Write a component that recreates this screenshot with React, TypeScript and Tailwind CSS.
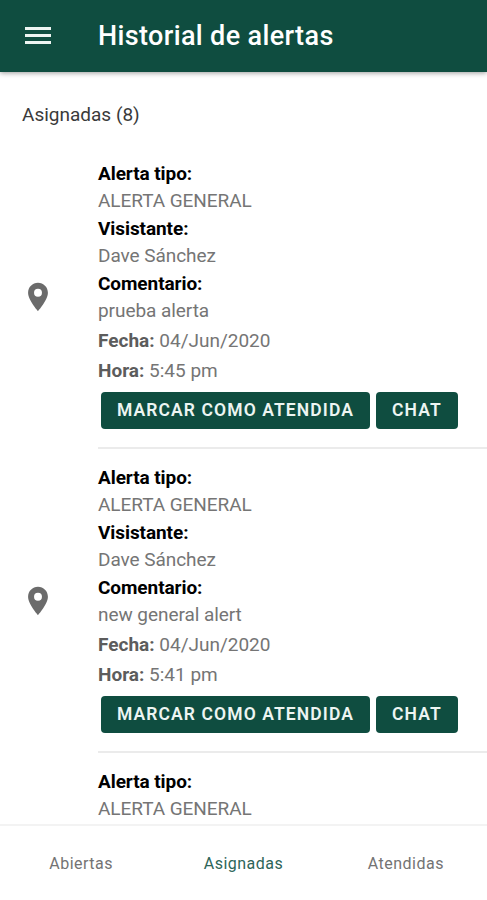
import React from "react";

type Alert = { type: string; visitor?: string; comment?: string; date?: string; time?: string };

const alerts: Alert[] = [
  { type: "ALERTA GENERAL", visitor: "Dave Sánchez", comment: "prueba alerta", date: "04/Jun/2020", time: "5:45 pm" },
  { type: "ALERTA GENERAL", visitor: "Dave Sánchez", comment: "new general alert", date: "04/Jun/2020", time: "5:41 pm" },
  { type: "ALERTA GENERAL" },
];

function Field({ label, value }: { label: string; value: string }) {
  return (
    <>
      <dt className="font-bold tracking-[-0.08px] text-black">{label}</dt>
      <dd className="tracking-[-0.06px]">{value}</dd>
    </>
  );
}

function AlertItem({ alert }: { alert: Alert }) {
  return (
    <li className="flex h-[304px] shrink-0 items-center">
      <div className="flex w-[98px] shrink-0 pl-[21px]">
        {alert.date && (
          <svg viewBox="0 0 24 24" className="size-[34px] fill-[#6b6b6b]">
            <path d="M12 2C8.13 2 5 5.13 5 9c0 5.25 7 13 7 13s7-7.750 7-13c0-3.870-3.130-7-7-7zm0 9.800a2.800 2.800 0 1 1 0-5.600 2.800 2.800 0 0 1 0 5.600z" />
          </svg>
        )}
      </div>
      <div className="h-full flex-1 border-b-2 border-[#ebebeb] pt-[15px]">
        <dl className="text-[19px] leading-[27.4px] text-[#757575]">
          <Field label="Alerta tipo:" value={alert.type} />
          {alert.visitor && <Field label="Visistante:" value={alert.visitor} />}
          {alert.comment && <Field label="Comentario:" value={alert.comment} />}
        </dl>
        {alert.date && (
          <>
            <div className="mt-[1.600px] text-[19px] leading-[29.7px] text-[#757575]">
              <p><b className="text-[#5c5c5c]">Fecha:</b> {alert.date}</p>
              <p><b className="text-[#5c5c5c]">Hora:</b> {alert.time}</p>
            </div>
            <div className="mt-[6.600px] ml-[3px] flex gap-[6px] text-[17.5px] font-semibold text-[#edf5f2]">
              <button className="h-[37px] w-[269px] rounded-[4px] bg-[#0f4d40] tracking-[1.100px] whitespace-nowrap">MARCAR COMO ATENDIDA</button>
              <button className="h-[37px] w-[82px] rounded-[4px] bg-[#0f4d40] tracking-[1.200px]">CHAT</button>
            </div>
          </>
        )}
      </div>
    </li>
  );
}

export default function App() {
  return (
    <div className="flex h-[900px] w-[487px] flex-col overflow-hidden bg-white font-['Roboto',sans-serif]">
      <header className="z-10 flex h-[72px] shrink-0 items-center bg-[#0f4d40] text-white shadow-[0_1px_5px_rgba(0,0,0,0.4)]">
        <button className="mb-px ml-[25px] flex w-[73px] flex-col gap-[4px]" aria-label="Menú">
          <span className="h-[3px] w-[26px] bg-[#edf5f2]" />
          <span className="h-[3px] w-[26px] bg-[#edf5f2]" />
          <span className="h-[3px] w-[26px] bg-[#edf5f2]" />
        </button>
        <h1 className="text-[27px] font-medium tracking-[0.36px]">Historial de alertas</h1>
      </header>
      <main className="flex min-h-0 flex-1 flex-col overflow-hidden">
        <h2 className="h-[73px] shrink-0 pt-[29px] pl-[22px] text-[19px] leading-[28px] text-[#3a3a3a]">Asignadas (8)</h2>
        <ul className="flex flex-col">
          {alerts.map((a, i) => <AlertItem key={i} alert={a} />)}
        </ul>
      </main>
      <nav className="grid h-[76px] shrink-0 grid-cols-3 border-t-2 border-[#f3f3f3] bg-white text-center text-[16px] leading-[75px] tracking-[0.5px] text-[#737373]">
        <span>Abiertas</span>
        <span className="text-[#2d6558]">Asignadas</span>
        <span>Atendidas</span>
      </nav>
    </div>
  );
}
